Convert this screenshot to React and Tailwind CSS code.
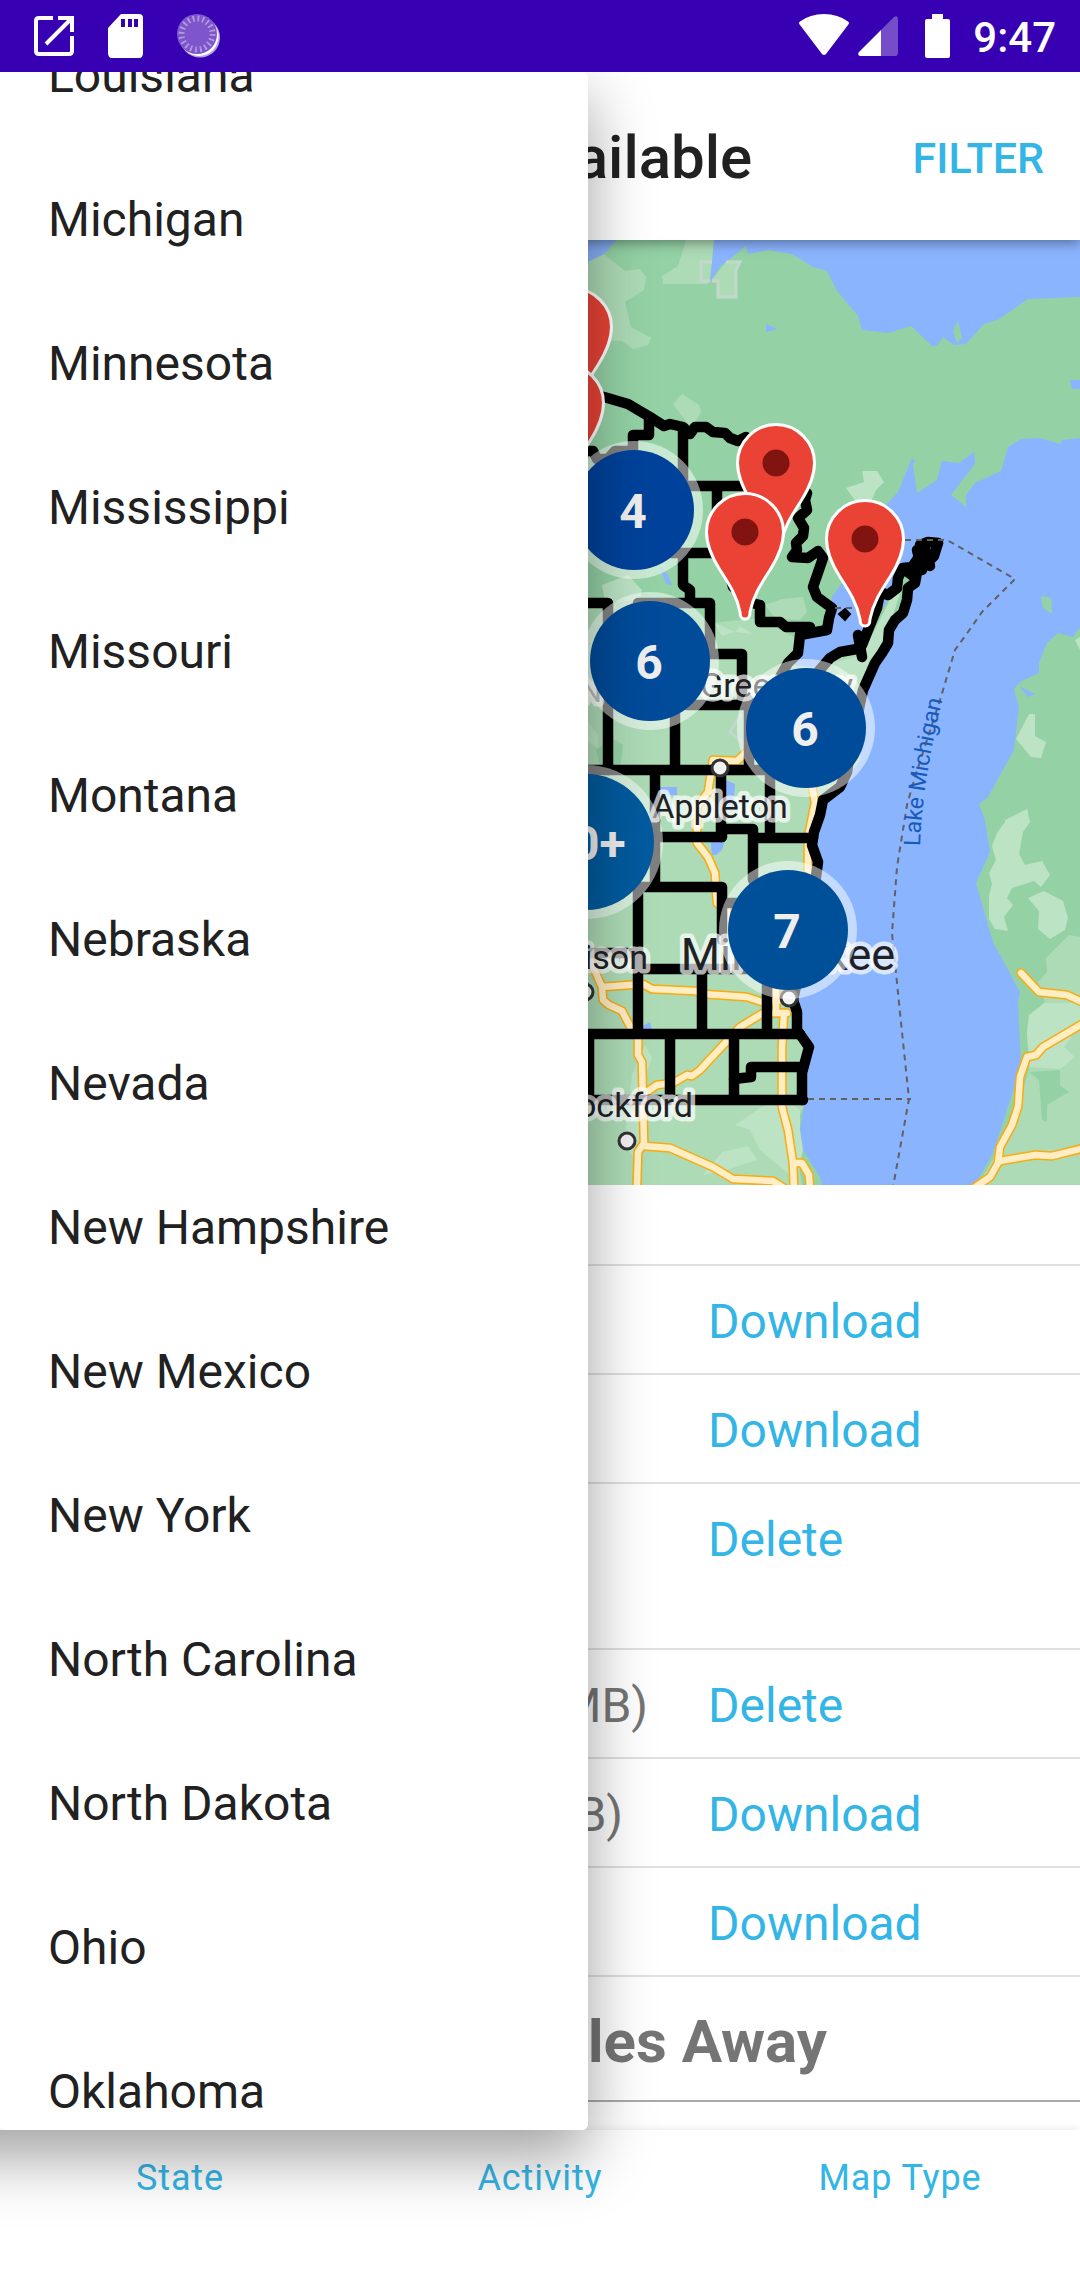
import { useState } from 'react'

const STATES = [
  'Louisiana', 'Michigan', 'Minnesota', 'Mississippi', 'Missouri', 'Montana', 'Nebraska', 'Nevada',
  'New Hampshire', 'New Mexico', 'New York', 'North Carolina', 'North Dakota', 'Ohio', 'Oklahoma',
]

const MAPS = [
  { id: 1, action: 'Download' },
  { id: 2, action: 'Download' },
  { id: 3, action: 'Delete', tall: true },
  { id: 4, action: 'Delete', size: 'MB)', pad: 'pr-[60px]' },
  { id: 5, action: 'Download', size: 'MB)', pad: 'pr-[85px]' },
  { id: 6, action: 'Download' },
]

const TABS = ['State', 'Activity', 'Map Type']

// --- Map data ---
const FOREST = '#94d2a5'
const LAND = '#addbb6'
const PALE = '#bbe3c4'

const AREAS = [
  { fill: FOREST, d: 'M560 300L588 262L606 252L616 240H714L710 282L721 266L746 246L748 254L768 250L792 254L813 267L827 271L837 291L858 316L862 330L888 333L911 326L932 346L937 346L943 337L954 345L966 344L984 324L999 319L1028 299L1080 297V438L1062 440L1060 444L1040 438L1021 439L1008 447L1001 471L975 483L966 495V507L951 495L975 464L974 452L959 463L942 461L937 480L917 493L912 458L898 492L887 504L860 560L843 582L832 597L832 625L803 637L798 655L785 670L815 668L840 655L870 630L900 580L938 543L907 600L888 643L863 687L860 760L840 787L823 800L813 853L817 877L800 920L793 1000L808 1047L802 1073L804 1105L800 1130L803 1150L820 1177L822 1185H0V240H560Z' },
  { fill: LAND, d: 'M0 600H640L690 640L713 623L757 618L800 640L795 660L830 660L870 640L880 650L863 687L860 760L840 787L823 800L813 853L817 877L800 920L793 1000L808 1047L802 1073L804 1105L794 1130L802 1185H0Z' },
  { fill: LAND, d: 'M686 240H714L710 278L708 284H663L662 276L678 266Z' },
  { fill: LAND, d: 'M580 263L604 254L625 271L640 269L646 277L644 290L625 302L631 327L651 338L648 345L633 349L622 341L580 340Z' },
  { fill: LAND, d: 'M682 394L673 404L688 424H694L701 412L699 405Z' },
  { fill: PALE, d: 'M862 471H877L884 482L876 490L871 502H856L846 488L864 482Z' },
  { fill: PALE, d: 'M602 585L628 575L642 590L640 600L605 602Z' },
  { fill: LAND, d: 'M765 605L782 599L803 597L807 612L800 620L775 618Z' },
  { fill: PALE, d: 'M713 622L735 632L740 626L753 634L735 632L722 636Z' },
  { fill: PALE, d: 'M903 585L890 600L876 627L862 655L832 663L842 678L862 684L880 650L893 615Z' },
  { fill: FOREST, d: 'M596 750L612 738L623 745L620 770L600 765Z' },
  { fill: PALE, d: 'M588 722L598 735V748L588 742Z' },
  { fill: FOREST, d: 'M953 331L958 321L962 338L957 343Z' },
  { fill: FOREST, d: 'M1041 596L1051 598L1052 614L1043 608Z' },
  // east shore
  { fill: FOREST, d: 'M1080 627L1073 637L1058 633L1047 643L1039 663V673L1020 682L1014 689L1019 707L1014 750L1003 770L988 797L979 804L985 820L990 852L976 883L993 942L1020 992L1018 1002L1021 1067L993 1153L975 1185H1080Z' },
  { fill: LAND, d: 'M1080 937L1069 935L1046 958L1047 972L1038 982L1045 1002L1029 1015L1027 1033L1029 1070L1016 1112L1000 1147L978 1185H1080Z' },
  { fill: PALE, d: 'M1029 714H1035V736L1046 742L1041 758L1031 757L1016 739Z' },
  { fill: PALE, d: 'M1027 809L1030 822L1023 832L1019 854L1025 865L1042 861L1050 875L1041 887L1034 881L1012 888L1007 898L1013 905L1004 917L1008 931L995 929L989 919V895L992 884L989 873L996 860L992 846L997 833L1007 819Z' },
  { fill: PALE, d: 'M1044 891L1063 901L1068 918L1065 930L1050 939L1038 929L1039 911L1028 898Z' },
  { fill: PALE, d: 'M1045 1003L1029 1015L1027 1033L1030 1067L1060 1069L1075 1057L1064 1047L1080 1025V1003Z' },
  { fill: FOREST, d: 'M1029 1072L1039 1080L1042 1120L1047 1122V1105L1069 1092L1060 1085V1070Z' },
  { fill: PALE, d: 'M735 1125L760 1108L785 1098L800 1110V1130L803 1150L796 1180L760 1150L750 1130Z' },
  { fill: PALE, d: 'M722 1152L748 1146L757 1160L720 1172L703 1175Z' },
  { fill: PALE, d: 'M645 1045L652 1058L640 1090L645 1130L636 1160L624 1145L632 1075Z' },
  { fill: PALE, d: 'M1075 640L1080 637V650Z' },
  { fill: PALE, d: 'M1005 820L1028 810V818L1005 840Z' },
]

const LAKES = [
  'M843 582L832 597L830 628L803 638L795 665L815 668L840 655L862 640L866 610L862 570Z',
  'M766 324L777 329L766 332Z',
  'M560 240H616L604 254L588 262L560 285Z',
  'M1070 380H1080V389H1072Z',
  'M660 567L668 575L672 585L666 584Z',
  'M659 787H677V795H661Z',
  'M726 780L735 784L733 810L724 803Z',
  'M710 836L727 834L722 850L716 855H712Z',
  'M643 1026L650 1022L652 1030H643Z',
  'M1019 686L1035 694L1028 697Z',
  'M912 458L915 461L912 466Z',
]

const ROADS = [
  'M602 987L643 984L652 989L695 991L703 994L747 997L762 1002L782 1000',
  'M590 960L602 987L603 1000L609 1005L622 1011L632 1030L638 1038V1055L642 1062L644 1143L638 1152L637 1185',
  'M644 1146L670 1148L713 1167L733 1179L773 1181L784 1188',
  'M645 1093L657 1085L673 1083L687 1075L692 1076L700 1070L740 1027L763 1013H787',
  'M784 1013L782 1047V1107L788 1130L793 1163L794 1190',
  'M793 1163H802L809 1175L810 1190',
  'M776 985V1012',
  'M747 752L737 761L713 760L708 792L697 807V843L708 857L715 873L717 903L727 910V935',
  'M812 785L815 803L808 837V875',
  'M1021 973L1039 992L1067 995L1084 1003',
  'M1084 1023L1043 1047L1036 1055L1027 1057L1020 1077L1018 1107L1012 1125L1000 1147L998 1163L990 1177L974 1188',
  'M1000 1161L1035 1155L1052 1156L1084 1148',
]

const COUNTIES = [
  'M580 395L604 397L628 404L650 417L664 426L670 424L683 427L690 434L695 427L706 427L713 432L725 433L730 438L738 441L746 437',
  'M649 420V435H633V451H615L608 459H597L593 451H580',
  'M683 430V486H745',
  'M717 490V520',
  'M807 493L805 500L807 510L798 518L804 528L803 536L796 543L797 550L792 557L808 558L818 551L823 558L813 587L817 597L832 608L829 618L827 630L800 635L798 653L788 663L780 677',
  'M650 553H713M683 557V585L690 590V603',
  'M580 603H608V770',
  'M638 603H710V654H742V705H687M675 706V768M749 700V768',
  'M580 770H767M770 772V837M655 772V885M721 772V837',
  'M732 583L733 587M752 603L760 605V622H780L786 627H810',
  'M660 837H722V829H753V880M753 838H813',
  'M638 887H722V940M727 903H755M638 887V1033M580 953H638M638 969H767M702 969V1033M767 983V1033',
  'M580 1034H800M589 1034V1100M670 1034V1100M734 1034V1100M580 1100H803',
  'M802 1067H751V1077L734 1079',
  'M938 543L928 542L920 545L919 557L912 567L903 568L898 578L897 588L888 595L880 592L877 608L870 625L862 645L857 649L840 652L830 658L818 672',
  'M938 543L934 556L926 564L917 572L915 583L908 588L907 600L903 613L895 620L889 630L888 643L882 653L875 663L863 690L852 740L847 772L840 787L823 800L820 815L814 832L812 845L818 862L815 885L808 930L793 1000L797 1012V1030L809 1047L802 1073L802 1100',
  'M917 550L922 570M924 545L930 566M858 635L862 657M904 569L914 577',
]

const BORDERS = [
  'M905 540H947L1015 579L982 612L968 632L955 650L940 700L915 777L907 805L897 867L892 933L900 1013L909 1099L893 1187',
  'M808 1099H911',
  'M835 608H855',
]

const CITIES = [
  { x: 720, y: 768 },
  { x: 789, y: 998 },
  { x: 627, y: 1141 },
  { x: 585, y: 992 },
]

const LABELS = [
  { name: 'Green Bay', x: 700, y: 697, anchor: 'start', size: 34 },
  { name: 'Appleton', x: 720, y: 818, anchor: 'middle', size: 34 },
  { name: 'Milwaukee', x: 788, y: 970, anchor: 'middle', size: 45 },
  { name: 'Madison', x: 648, y: 969, anchor: 'end', size: 34 },
  { name: 'Rockford', x: 693, y: 1117, anchor: 'end', size: 34 },
]

const CLUSTERS = [
  { x: 634, y: 510, r: 60, label: '4', fill: '#00429b' },
  { x: 650, y: 661, r: 60, label: '6', fill: '#004b9a' },
  { x: 806, y: 728, r: 60, label: '6', fill: '#004b9a' },
  { x: 586, y: 842, r: 68, label: '10+', fill: '#005b9e' },
  { x: 788, y: 930, r: 60, label: '7', fill: '#005099' },
]

const PINS = [
  { x: 573, y: 327 },
  { x: 565, y: 403 },
  { x: 776, y: 463 },
  { x: 745, y: 532 },
  { x: 865, y: 539 },
]

function StatusBar() {
  return (
    <div className="flex h-[72px] items-center bg-[#3700b3] pr-[24px] pl-[34px] text-white">
      <div className="flex flex-1 items-center gap-[34px]">
        <svg className="h-[40px] w-[40px]" viewBox="0 0 40 40" fill="none" stroke="currentColor" strokeWidth="4">
          <path d="M19 2H5Q2 2 2 5V35Q2 38 5 38H35Q38 38 38 35V20" />
          <path d="M24 2H38V16M37 3L12 28" />
        </svg>
        <svg className="h-[44px] w-[35px]" viewBox="0 0 35 44">
          <path fill="currentColor" d="M13 0H31Q35 0 35 4V39Q35 44 31 44H4Q0 44 0 39V14Z" />
          <path fill="#3700b3" d="M13 5h4v8h-4zM20 5h4v8h-4zM26 5h4v8h-4z" />
        </svg>
        <svg className="h-[44px] w-[44px]" viewBox="0 0 44 44">
          <circle cx="23" cy="23.500" r="20" fill="#b9a2e4" />
          <circle cx="22" cy="22.500" r="19.500" fill="#fff" />
          <circle cx="20" cy="20" r="20" fill="#7e55cb" />
          <circle cx="20" cy="20" r="15.500" fill="none" stroke="#b199e0" strokeWidth="6" strokeDasharray="1.800 3.070" />
        </svg>
      </div>
      <div className="flex items-center">
        <svg className="h-[44px] w-[52px]" viewBox="0 0 52 44">
          <path fill="currentColor" d="M2 11Q0 9 2 7.500Q12 0 26 0Q40 0 50 7.500Q52 9 50 11L28 40Q26 42 24 40Z" />
        </svg>
        <svg className="ml-2 h-[40px] w-[40px]" viewBox="0 0 40 40">
          <path fill="#754dc9" d="M23 14L36 1Q40-1 40 3V37Q40 40 37 40H23Z" />
          <path fill="currentColor" d="M23 14V40H2Q-1 39 1 36Z" />
        </svg>
        <svg className="ml-[27px] h-[44px] w-[25px]" viewBox="0 0 25 44">
          <path fill="currentColor" d="M7 0H18V5H23Q25 5 25 7V42Q25 44 23 44H2Q0 44 0 42V7Q0 5 2 5H7Z" />
        </svg>
        <span className="ml-[23px] pt-1 text-[42px] leading-[50px] font-medium">9:47</span>
      </div>
    </div>
  )
}

function Pin({ x, y }) {
  return (
    <g transform={`translate(${x} ${y})`}>
      <path
        d="M0-38.500C21-38.500 38.500-21 38.500 0C38.500 14 32 27 25 38C16 52 8 64 5 80C5 86 3 87 0 87C-3 87-5 86-5 80C-8 64-16 52-25 38C-32 27-38.500 14-38.500 0C-38.500-21-21-38.500 0-38.500Z"
        fill="#ea4335"
        stroke="#fff"
        strokeWidth="3"
      />
      <circle r="13.500" fill="#811411" />
    </g>
  )
}

function StateMap() {
  return (
    <svg
      className="block h-[945px] w-full bg-[#8bb4ff]"
      viewBox="0 240 1080 945"
      preserveAspectRatio="xMidYMid slice"
      role="img"
      aria-label="Map"
    >
      {AREAS.map((a) => <path key={a.d} d={a.d} fill={a.fill} />)}
      {LAKES.map((d) => <path key={d} d={d} fill="#8bb4ff" />)}
      <path d="M726 262H740L736 270V297H718V281H711Z" fill={LAND} />
      <path d="M712 262H701V281H710M726 262H740L736 270V297H718V281H712" fill="none" stroke="#c3d8cd" strokeWidth="3" />
      <path d="M741 714L730 732L745 744" fill="none" stroke="#c3d8cd" strokeWidth="3" />

      <g fill="none" strokeLinejoin="round" strokeLinecap="round">
        {ROADS.map((d) => <path key={d} d={d} stroke="#f9ab10" strokeWidth="9.500" />)}
        {ROADS.map((d) => <path key={d} d={d} stroke="#ffedc3" strokeWidth="6.500" />)}
        {COUNTIES.map((d) => <path key={d} d={d} stroke="#000" strokeWidth="10.500" />)}
      </g>
      <path d="M839 614L845 609L850 614L845 620Z" stroke="#000" strokeWidth="2" />
      {BORDERS.map((d) => <path key={d} d={d} fill="none" stroke="#616161" strokeWidth="2" strokeDasharray="6 5" />)}

      {CITIES.map((c) => <circle key={c.x} cx={c.x} cy={c.y} r="8" fill="#f1f1f1" stroke="#333" strokeWidth="3" />)}
      <g fill="#202124" stroke="#fff" strokeOpacity="0.700" strokeWidth="9" strokeLinejoin="round" paintOrder="stroke">
        <text x="602" y="702" fontSize="30" textAnchor="end" fill="#777">WISCONSIN</text>
        {LABELS.map((l) => (
          <text key={l.name} x={l.x} y={l.y} fontSize={l.size} textAnchor={l.anchor}>{l.name}</text>
        ))}
      </g>
      <path id="lake-line" d="M920 846Q922 780 947 680" fill="none" />
      <text fontSize="23" fill="#185abc">
        <textPath href="#lake-line">Lake Michigan</textPath>
      </text>

      {CLUSTERS.map((c) => (
        <g key={`${c.x}-${c.y}`}>
          <circle cx={c.x} cy={c.y} r={c.r + 9} fill="#fff" fillOpacity="0.500" />
          <circle cx={c.x} cy={c.y} r={c.r} fill={c.fill} />
          <text x={c.x - 1} y={c.y + 18} fontSize="48" fontWeight="700" textAnchor="middle" fill="#eee">{c.label}</text>
        </g>
      ))}
      {PINS.map((p) => <Pin key={p.x} x={p.x} y={p.y} />)}
    </svg>
  )
}

function MapRow({ map }) {
  return (
    <li className={`flex border-b-2 border-[#e0e0e0] pt-[27px] pb-[23px] text-[48px] leading-[57px] ${map.tall ? 'min-h-[166px]' : ''}`}>
      <span className={`w-[708px] text-right text-[#757575] ${map.pad || ''}`}>{map.size}</span>
      <button type="button" className="self-start text-[#33b5e5]">{map.action}</button>
    </li>
  )
}

function StateDrawer({ selected, onSelect }) {
  return (
    <aside className="absolute top-0 bottom-[96px] left-0 z-20 w-[588px]">
      {/* shadow caster runs past the left edge so the bottom shadow stays even */}
      <div className="absolute inset-y-0 right-0 -left-20 rounded-md shadow-[0_26px_64px_rgba(0,0,0,0.38)]" />
      <div className="relative h-full overflow-hidden rounded-md bg-white">
        {/* list is scrolled part way through its first row */}
        <ul className="-mt-[68px]">
          {STATES.map((name) => (
            <li key={name}>
              <button
                type="button"
                aria-pressed={selected === name}
                onClick={() => onSelect(name)}
                className="flex h-[144px] w-full items-center px-12 text-left text-[48px] leading-[56px] text-[#212121]"
              >
                {name}
              </button>
            </li>
          ))}
        </ul>
      </div>
    </aside>
  )
}

export default function App() {
  const [selected, setSelected] = useState(null)

  return (
    <div className="flex min-h-screen flex-col bg-white font-['Roboto',sans-serif]">
      <StatusBar />
      <div className="relative mb-[54px] flex flex-1 flex-col overflow-hidden">
        <header className="relative z-10 flex h-[168px] items-center justify-center bg-white pt-1 pl-4 shadow-[0_3px_12px_rgba(0,0,0,0.4)]">
          <h1 className="text-[60px] leading-[70px] font-medium text-[#212121]">Maps Available</h1>
          <button type="button" className="absolute right-9 text-[43px] leading-[50px] font-medium text-[#33b5e5]">
            FILTER
          </button>
        </header>

        <main className="flex-1">
          <StateMap />
          <ul className="mt-[79px] border-t-2 border-[#e0e0e0]">
            {MAPS.map((m) => <MapRow key={m.id} map={m} />)}
          </ul>
          <h2 className="border-b-2 border-[#a9a9a9] pt-[30px] pr-[253px] pb-[23px] text-right text-[60px] leading-[70px] font-bold text-[#757575]">
            Miles Away
          </h2>
        </main>

        <nav className="grid h-[96px] grid-cols-3 bg-white shadow-[0_0_10px_rgba(0,0,0,0.1)]">
          {TABS.map((t) => (
            <button key={t} type="button" className="text-[36px] leading-[42px] tracking-wide text-[#33b5e5]">
              {t}
            </button>
          ))}
        </nav>

        <StateDrawer selected={selected} onSelect={setSelected} />
      </div>
    </div>
  )
}
